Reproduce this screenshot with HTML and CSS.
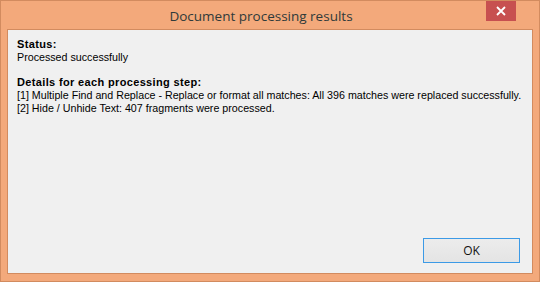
FILE: index.html
```html
<!DOCTYPE html>
<html>
<head>
<meta charset="utf-8">
<link rel="stylesheet" href="styles.css">
</head>
<body>
<div class="window">
  <div class="titlebar">
    <div class="title">Document processing results</div>
    <div class="close"><svg width="10" height="10" viewBox="0 0 10 10"><path d="M1 1L9 9M9 1L1 9" stroke="#fff" stroke-width="1.8"/></svg></div>
  </div>
  <div class="client">
    <div class="content">
      <div class="bold">Status:</div>
      <div>Processed successfully</div>
      <div class="gap"></div>
      <div class="bold">Details for each processing step:</div>
      <div>[1] Multiple Find and Replace - Replace or format all matches: All 396 matches were replaced successfully.</div>
      <div>[2] Hide / Unhide Text: 407 fragments were processed.</div>
    </div>
    <div class="footer">
      <button class="ok">OK</button>
    </div>
  </div>
</div>
</body>
</html>
```
FILE: styles.css
```css
html, body { margin: 0; padding: 0; }
body { width: 540px; height: 282px; overflow: hidden; }
.window {
  box-sizing: border-box;
  width: 540px; height: 282px;
  background: #f3a97b;
  border: 1px solid #d28b5f;
  padding: 0 6px 7px 6px;
  display: flex; flex-direction: column;
  position: relative;
}
.titlebar {
  height: 28px;
  padding-right: 18px;
  display: flex; align-items: center; justify-content: center;
}
.title {
  font-family: "Open Sans", "Noto Sans", sans-serif;
  font-size: 13.5px;
  color: #2f3a3a;
  margin-top: 2px;
}
.close {
  position: absolute; top: 0; left: 485px;
  width: 30px; height: 20px;
  background: #c75050;
  display: flex; align-items: center; justify-content: center;
}
.client {
  flex: 1;
  background: #f0f0f0;
  border: 1px solid #d28b5f;
  display: flex; flex-direction: column;
  font-family: "Liberation Sans", Arial, sans-serif;
  font-size: 10.7px;
  color: #000;
}
.content {
  padding: 8px 0 0 9px;
  line-height: 13px;
  white-space: nowrap;
  flex: 1;
}
.bold { font-weight: bold; font-size: 11px; letter-spacing: 0.35px; }
.gap { height: 12px; }
.footer {
  display: flex; justify-content: flex-end;
  padding: 0 12px 10px 0;
}
.ok {
  width: 97px; height: 25px;
  box-sizing: border-box;
  border: 1px solid #3c9ae6;
  background: linear-gradient(#ececec, #e4e4e4);
  font-family: "Open Sans", "Noto Sans", sans-serif;
  font-size: 12px; color: #111;
  padding: 0; margin: 0;
}
```
